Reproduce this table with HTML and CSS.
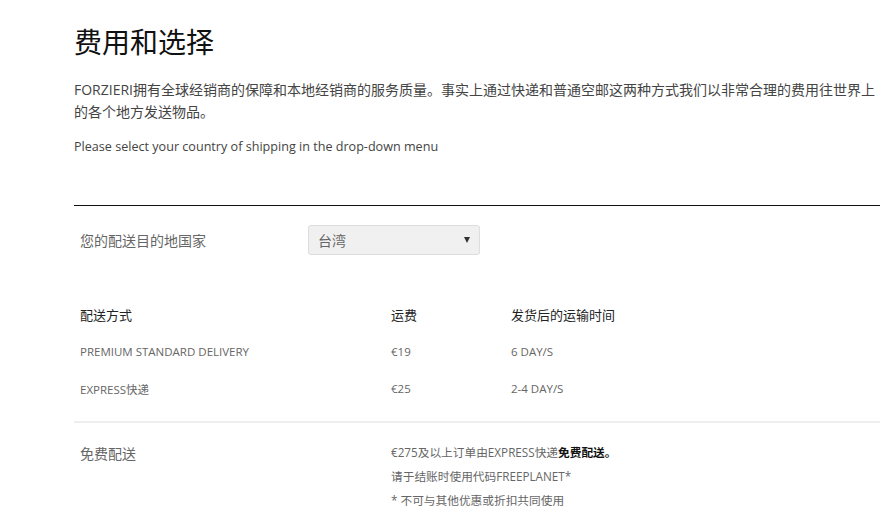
FILE: index.html
```html
<!DOCTYPE html>
<html lang="zh-CN">
<head>
    <meta charset="UTF-8">
    <meta name="viewport" content="width=device-width, initial-scale=1.0">
    <title>费用和选择 - FORZIERI</title>
    <link rel="stylesheet" href="styles.css">
</head>
<body>

<div class="page">
    <h1>费用和选择</h1>

    <p class="intro">FORZIERI拥有全球经销商的保障和本地经销商的服务质量。事实上通过快递和普通空邮这两种方式我们以非常合理的费用往世界上的各个地方发送物品。</p>
    <p class="note">Please select your country of shipping in the drop-down menu</p>

    <div class="country-row">
        <div class="label">您的配送目的地国家</div>
        <div class="select-wrap">
            <select class="country-select">
                <option>台湾</option>
                <option>中国</option>
                <option>香港</option>
                <option>日本</option>
            </select>
        </div>
    </div>

    <div class="rates">
        <div class="rate-row head">
            <div>配送方式</div>
            <div>运费</div>
            <div>发货后的运输时间</div>
        </div>
        <div class="rate-row">
            <div>PREMIUM STANDARD DELIVERY</div>
            <div>€19</div>
            <div>6 DAY/S</div>
        </div>
        <div class="rate-row">
            <div>EXPRESS快递</div>
            <div>€25</div>
            <div>2-4 DAY/S</div>
        </div>
    </div>

    <div class="free-row">
        <div class="label">免费配送</div>
        <div class="free-info">
            <div>€275及以上订单由EXPRESS快递<b>免费配送。</b></div>
            <div>请于结账时使用代码FREEPLANET*</div>
            <div>* 不可与其他优惠或折扣共同使用</div>
        </div>
    </div>
</div>

</body>
</html>
```

FILE: styles.css
```css
body {
    font-family: "Open Sans", "Noto Sans CJK SC", sans-serif;
    margin: 0;
    padding: 0;
    background-color: white;
    color: #333;
}
.page {
    width: 806px;
    margin-left: 74px;
    padding-top: 22px;
}
h1 {
    margin: 0;
    font-size: 28px;
    line-height: 40px;
    font-weight: normal;
    color: #111;
}
.intro {
    margin: 17px 0 0 0;
    font-size: 14px;
    line-height: 22px;
    color: #444;
}
.note {
    margin: 13px 0 0 0;
    font-size: 12.6px;
    line-height: 22px;
    color: #444;
}
.country-row {
    margin-top: 47px;
    border-top: 1px solid #111;
    padding: 19px 0 0 6px;
    display: grid;
    grid-template-columns: 228px 172px;
    align-items: center;
}
.label {
    font-size: 14px;
    color: #666;
}
.select-wrap {
    position: relative;
}
.select-wrap::after {
    content: "";
    position: absolute;
    right: 10px;
    top: 12px;
    border-left: 3px solid transparent;
    border-right: 3px solid transparent;
    border-top: 6px solid #333;
    pointer-events: none;
}
.country-select {
    appearance: none;
    -webkit-appearance: none;
    width: 172px;
    height: 30px;
    padding: 0 9px;
    font-family: inherit;
    font-size: 14px;
    color: #666;
    background-color: #f0f0f0;
    border: 1px solid #ddd;
    border-radius: 3px;
}
.rates {
    margin-top: 41px;
}
.rate-row {
    display: grid;
    grid-template-columns: 311px 120px 1fr;
    height: 37px;
    align-items: center;
    font-size: 11.5px;
    color: #666;
}
.rate-row div {
    padding-left: 6px;
}
.rate-row.head {
    font-size: 13px;
    color: #222;
}
.free-row {
    margin-top: 14px;
    border-top: 2px solid #eee;
    padding-top: 17px;
    display: grid;
    grid-template-columns: 311px 1fr;
}
.free-row .label {
    padding-left: 6px;
    line-height: 24px;
    margin-top: 2px;
}
.free-info {
    padding-left: 6px;
    font-size: 11.7px;
    line-height: 24px;
    color: #666;
}
.free-info b {
    color: #111;
}
```
